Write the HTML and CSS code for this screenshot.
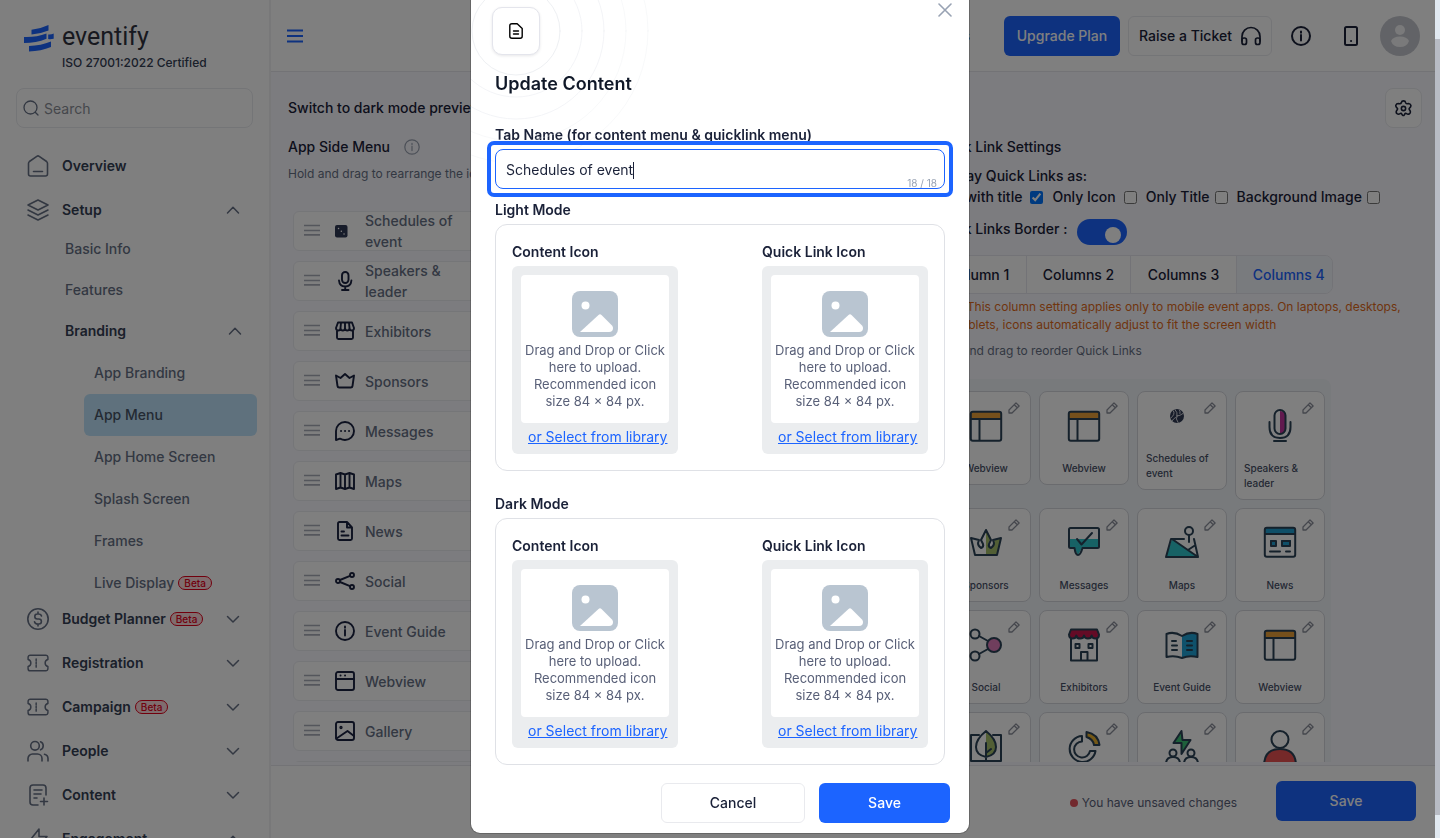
FILE: index.html
```
<!DOCTYPE html>
<html lang="en">
<head>
    <meta charset="UTF-8">
    <meta name="viewport" content="width=device-width, initial-scale=1.0">
    <link rel="stylesheet" href="styles.css">
    <title>App Menu - eventify</title>
</head>
<body>
    <!-- shared icons -->
    <svg class="d-none" xmlns="http://www.w3.org/2000/svg">
      <symbol id="i-up" viewBox="0 0 14 14"><path d="M1.5 10 7 4.2 12.500 10"/></symbol>
      <symbol id="i-down" viewBox="0 0 14 14"><path d="M1.500 4.500 7 10l5.500-5.500"/></symbol>
      <symbol id="i-ticket" viewBox="0 0 24 24"><path d="M3.500 3.500h17a2.300 2.300 0 0 1 2.300 2.300v2.400a3.900 3.900 0 0 0 0 7.600v2.400a2.300 2.300 0 0 1-2.300 2.300h-17a2.300 2.300 0 0 1-2.300-2.300v-2.400a3.900 3.900 0 0 0 0-7.600V5.800a2.300 2.300 0 0 1 2.300-2.300z"/><path d="M10 7.500v2M10 11v2M10 14.500v2"/></symbol>
      <symbol id="i-info" viewBox="0 0 20 20"><circle cx="10" cy="10" r="9"/><path d="M10 9v5.500M10 5.500v1.300"/></symbol>
      <symbol id="i-drag" viewBox="0 0 16 12"><path d="M0 1.500h16M0 6.500h16M0 10.900h16"/></symbol>
      <symbol id="i-pencil" viewBox="0 0 12 12"><path d="M1 11V8L8 .9 11.100 4 4 11zM6.800 3.200l2 2"/></symbol>
      <symbol id="i-image" viewBox="0 0 46 46"><rect width="46" height="46" rx="8" fill="#b9c5d1"/><circle cx="13.500" cy="14.500" r="4" fill="#fff"/><path d="M8 41 26.500 24q1.500-1.300 3 0L40 34.500q1 1 1 2.500 0 4-4 4z" fill="#fff"/></symbol>
      <symbol id="q-webview" viewBox="0 0 34 34"><path d="M2 3h30v7H2z" fill="#eba139" stroke="none"/><rect x="1.800" y="2.800" width="30.400" height="29" rx="2"/><path d="M2 10h30M10.500 10v21"/></symbol>
    </svg>

    <div class="app">
      <aside class="sidebar">
        <div class="brand">
          <svg class="brand-mark" viewBox="0 0 30 27"><path d="M7.500 4.800Q16 4 24.500 0v5.500Q16 9 7.500 9.500zM0 12q12 .5 22.500-3.500v5.200Q12 18 0 18zM24.200 9.500q3 .4 5.500-1v5.200q-3 .8-5.500.3zM5 21q12-.5 22-4.500V22Q17 26 5 26.500z"/></svg>
          <div>
            <div class="brand-name">eventify</div>
            <div class="brand-note">ISO 27001:2022 Certified</div>
          </div>
        </div>
        <div class="search">
          <svg class="search-icon" viewBox="0 0 16 16"><circle cx="7.500" cy="7.500" r="6.500"/><path d="m12.200 12.200 2.800 2.800"/></svg>
          <input type="text" placeholder="Search" aria-label="Search">
        </div>
        <nav>
          <a class="nav-row" href="#"><svg class="nav-icon" viewBox="0 0 22 22"><path d="M1.500 8.500Q1.500 7.300 2.400 6.500L9.800 1.300q1.200-.8 2.400 0l7.400 5.200q.9.800.9 2V19q0 2-2 2h-15q-2 0-2-2zM6.500 16.500h9"/></svg>Overview</a>
          <a class="nav-row" href="#"><svg class="nav-icon" viewBox="0 0 22 22"><path d="M11 1 21 6l-10 5L1 6zM1 11l10 5 10-5M1 16l10 5 10-5"/></svg>Setup<svg class="chevron"><use href="#i-up"/></svg></a>
          <div class="nav-sub">
            <a class="sub-row" href="#">Basic Info</a>
            <a class="sub-row" href="#">Features</a>
            <a class="sub-row open" href="#">Branding<svg class="chevron"><use href="#i-up"/></svg></a>
            <a class="leaf" href="#">App Branding</a>
            <a class="leaf active" href="#">App Menu</a>
            <a class="leaf" href="#">App Home Screen</a>
            <a class="leaf" href="#">Splash Screen</a>
            <a class="leaf" href="#">Frames</a>
            <a class="leaf" href="#">Live Display<span class="beta">Beta</span></a>
          </div>
          <a class="nav-row" href="#"><svg class="nav-icon" viewBox="0 0 22 22"><circle cx="11" cy="11" r="10.200"/><path d="M14.500 8Q14 6 11.500 6h-1.200a2.400 2.400 0 0 0 0 5h1.600a2.500 2.500 0 0 1 0 5h-1.200Q8 16 7.500 13.800M11 4v2M11 16v2"/></svg>Budget Planner<span class="beta">Beta</span><svg class="chevron"><use href="#i-down"/></svg></a>
          <a class="nav-row" href="#"><svg class="nav-icon"><use href="#i-ticket"/></svg>Registration<svg class="chevron"><use href="#i-down"/></svg></a>
          <a class="nav-row" href="#"><svg class="nav-icon"><use href="#i-ticket"/></svg>Campaign<span class="beta">Beta</span><svg class="chevron"><use href="#i-down"/></svg></a>
          <a class="nav-row" href="#"><svg class="nav-icon" viewBox="0 0 22 22"><circle cx="8" cy="5.800" r="4.300"/><path d="M1 21v-2.500a4.500 4.500 0 0 1 4.500-4.500h5a4.500 4.500 0 0 1 4.500 4.500V21M13.500 1.800a4.300 4.300 0 0 1 0 8M17.500 14.300q3.500 1 3.500 4.200V21"/></svg>People<svg class="chevron"><use href="#i-down"/></svg></a>
          <a class="nav-row" href="#"><svg class="nav-icon" viewBox="0 0 22 22"><path d="M11 21H6q-3 0-3-3V4q0-3 3-3h10q3 0 3 3v7M7 6h8M7 10h7M7 14h3M13.500 17.500h7M17 14v7"/></svg>Content<svg class="chevron"><use href="#i-down"/></svg></a>
          <a class="nav-row" href="#"><svg class="nav-icon" viewBox="0 0 22 22"><path d="M12 1v7.500h8L10 21v-7.500H2z"/></svg>Engagement<svg class="chevron"><use href="#i-up"/></svg></a>
        </nav>
      </aside>

      <main class="main">
        <header class="topbar">
          <button class="icon-btn menu-btn" aria-label="Toggle menu"><svg viewBox="0 0 16 14"><path d="M0 1.500h16M0 7h16M0 12.500h16"/></svg></button>
          <div class="topbar-tools">
            <a class="top-link" href="#">Tutorials</a>
            <button class="btn primary upgrade">Upgrade Plan</button>
            <button class="btn outline ticket">Raise a Ticket
              <svg viewBox="0 0 20 20"><path d="M1 15v-4.500a9 9 0 0 1 18 0V15"/><rect x="1" y="12" width="4.500" height="6.500" rx="2"/><rect x="14.500" y="12" width="4.500" height="6.500" rx="2"/></svg>
            </button>
            <button class="icon-btn info-btn" aria-label="Info"><svg><use href="#i-info"/></svg></button>
            <button class="icon-btn phone-btn" aria-label="Mobile preview"><svg viewBox="0 0 14 20"><rect x="1" y="1" width="12" height="18" rx="1.500"/><path d="M7 15h.1"/></svg></button>
            <svg class="avatar" viewBox="0 0 40 40"><circle cx="20" cy="20" r="20" fill="#c5c7ce"/><circle cx="20" cy="14" r="5" fill="#f4f4f6"/><path d="M11 25q2-4.500 9-4.500t9 4.500q-2 6-9 6t-9-6z" fill="#f4f4f6"/></svg>
          </div>
        </header>

        <section class="content">
          <div class="preview-row">
            <h2>Switch to dark mode preview</h2>
            <button class="btn outline gear" aria-label="Settings"><svg viewBox="0 0 16 16"><path d="M6 2.500Q6.300.8 8 .8t2 1.700q.3 1.200 1.500 1l1.200-.2q1.700.1 2.200 1.600.3 1.500-1 2.400-1 .8-.3 1.900l.7 1.100q.6 1.700-.7 2.700-1.400.8-2.700-.1-1-.8-1.700.3l-.5.900q-.7.900-1.700.2l-.6-1q-.7-1.200-1.700-.4-1.400 1-2.800 0-1.200-1-.5-2.600l.7-1.100q.7-1.100-.3-1.900-1.300-1-1-2.400.6-1.500 2.200-1.600l1.300.2q1.200.2 1.700-1z"/><circle cx="8" cy="8" r="2"/></svg></button>
          </div>

          <div class="columns">
            <div class="side-menu">
              <h2 class="section-title">App Side Menu <svg class="hint-icon"><use href="#i-info"/></svg></h2>
              <p class="hint">Hold and drag to rearrange the icons</p>
              <ul class="menu-list">
                <li><svg class="drag"><use href="#i-drag"/></svg><svg class="menu-icon" viewBox="0 0 20 20"><rect x="0" y="4" width="12.500" height="12.500" rx="2" fill="#2f3854" stroke="none"/><path d="M3.500 7.500h.1M6.300 10.200h.1M9 13h.1" stroke="#fff" stroke-width="1.400"/></svg><span>Schedules of event</span></li>
                <li><svg class="drag"><use href="#i-drag"/></svg><svg class="menu-icon" viewBox="0 0 20 20"><rect x="7" y="1" width="6.500" height="11" rx="3.200"/><path d="M4 9.500q.5 6 6.200 6t6.200-6M10.200 15.500v3.500M7 19h6.500"/></svg><span>Speakers &amp; leader</span></li>
                <li><svg class="drag"><use href="#i-drag"/></svg><svg class="menu-icon" viewBox="0 0 20 20"><path d="M2 9v7.500Q2 18 3.500 18h13q1.500 0 1.500-1.500V9M3 1.500h14L19 7q0 2.500-2.200 2.500T14.500 7q0 2.500-2.200 2.500T10 7q0 2.500-2.200 2.500T5.500 7q0 2.500-2.200 2.500T1 7zM6 1.500 5.500 7M10 1.500V7M14 1.500l.5 5.500"/></svg><span>Exhibitors</span></li>
                <li><svg class="drag"><use href="#i-drag"/></svg><svg class="menu-icon" viewBox="0 0 20 20"><path d="M1 4.500 5.500 7 10 3l4.500 4L19 4.500 17.500 15q-.2 1.500-1.700 1.500H4.200q-1.500 0-1.700-1.500z"/></svg><span>Sponsors</span></li>
                <li><svg class="drag"><use href="#i-drag"/></svg><svg class="menu-icon" viewBox="0 0 20 20"><path d="M1 19V10a9 9 0 1 1 9 9q-2.500 0-5-1.300zM6 10h.1M10 10h.1M14 10h.1"/></svg><span>Messages</span></li>
                <li><svg class="drag"><use href="#i-drag"/></svg><svg class="menu-icon" viewBox="0 0 20 20"><path d="M1 3.500 5.500 2 10 3.500 14.500 2 19 3.500V18l-4.500-1.500L10 18l-4.500-1.500L1 18zM5.500 2v14.500M10 3.500V18M14.500 2v14.500"/></svg><span>Maps</span></li>
                <li><svg class="drag"><use href="#i-drag"/></svg><svg class="menu-icon" viewBox="0 0 20 20"><path d="M4.500 1H12l5 5.500v11q0 1.500-1.500 1.500h-11Q3 19 3 17.500v-15Q3 1 4.500 1zM12 1v5.500h5M6.500 10.500H9M6.500 14.500h7"/></svg><span>News</span></li>
                <li><svg class="drag"><use href="#i-drag"/></svg><svg class="menu-icon" viewBox="0 0 20 20"><circle cx="3" cy="10" r="2"/><circle cx="17" cy="4" r="2"/><circle cx="17" cy="16" r="2"/><path d="m5 9 10-4.200M5 11l10 4.200"/></svg><span>Social</span></li>
                <li><svg class="drag"><use href="#i-drag"/></svg><svg class="menu-icon"><use href="#i-info"/></svg><span>Event Guide</span></li>
                <li><svg class="drag"><use href="#i-drag"/></svg><svg class="menu-icon" viewBox="0 0 20 20"><rect x="1" y="1" width="18" height="18" rx="2"/><path d="M1 8h18M5.500 4.500h.1M10 4.500h.1"/></svg><span>Webview</span></li>
                <li><svg class="drag"><use href="#i-drag"/></svg><svg class="menu-icon" viewBox="0 0 20 20"><rect x="1" y="1" width="18" height="18" rx="2"/><circle cx="6" cy="6.500" r=".7"/><path d="m1.500 17.500 11-7.500 6.500 5"/></svg><span>Gallery</span></li>
                <li><svg class="drag"><use href="#i-drag"/></svg></li>
              </ul>
            </div>

            <div class="quick">
              <h2 class="section-title">Quick Link Settings</h2>
              <p class="option-title">Display Quick Links as:</p>
              <div class="options">
                <label>Icon with title <input type="checkbox" checked></label>
                <label>Only Icon <input type="checkbox"></label>
                <label>Only Title <input type="checkbox"></label>
                <label>Background Image <input type="checkbox"></label>
              </div>
              <label class="border-row">Quick Links Border : <input class="switch" type="checkbox" checked></label>
              <div class="segments">
                <button>Column 1</button>
                <button>Columns 2</button>
                <button>Columns 3</button>
                <button class="active">Columns 4</button>
              </div>
              <p class="warning">Note: This column setting applies only to mobile event apps. On laptops, desktops, and tablets, icons automatically adjust to fit the screen width</p>
              <p class="hint">Hold and drag to reorder Quick Links</p>
              <div class="cards">
                <div class="card"><svg class="pencil"><use href="#i-pencil"/></svg><svg class="card-icon"><use href="#q-webview"/></svg><span>Webview</span></div>
                <div class="card"><svg class="pencil"><use href="#i-pencil"/></svg><svg class="card-icon"><use href="#q-webview"/></svg><span>Webview</span></div>
                <div class="card"><svg class="pencil"><use href="#i-pencil"/></svg><svg class="card-icon small" viewBox="0 0 24 24"><circle cx="7" cy="7" r="7" fill="#303a55" stroke="none"/><path d="M7 7Q8 3.500 5 .5M7 7q3 0 6-2.500M7 7Q5 9.500 8 13.500M3.500 2Q5.500 5.500 .8 9M9.500 1q1 1.500.5 3.500M5.500 8.500Q3.500 9.500 2 12" stroke="#fff" stroke-width=".8"/></svg><span>Schedules of event</span></div>
                <div class="card"><svg class="pencil"><use href="#i-pencil"/></svg><svg class="card-icon" viewBox="0 0 34 34"><path d="M17 2q6 0 6 7v9q0 7-6 7z" fill="#c2329c" stroke="none"/><rect x="11.500" y="1" width="11" height="24" rx="5.500"/><path d="M6.500 13v5q0 11 10.500 11t10.500-11v-5M11 32h12"/></svg><span>Speakers &amp; leader</span></div>

                <div class="card"><svg class="pencil"><use href="#i-pencil"/></svg><svg class="card-icon" viewBox="0 0 34 34"><path d="m17 4 5 8-3 6q1 4 4 3 3-1 2-7l7-2-4 17H17z" fill="#a5be6b" stroke="none"/><path d="M6 29 2 12l8 2-1 3q0 3 3 5 3-1 2-4l-2-4 5-10 5 10-2 4q-1 3 2 4 3-2 3-5l-1-3 8-2-4 17z"/></svg><span>Sponsors</span></div>
                <div class="card"><svg class="pencil"><use href="#i-pencil"/></svg><svg class="card-icon" viewBox="0 0 34 34"><path d="M2 13h30v9H15l-4 7-4-7H2z" fill="#2fc4cb" stroke="none"/><path d="M3.500 2h27q1.500 0 1.500 1.500v17q0 1.500-1.500 1.500H15.500q-2 7-4.500 7t-3.500-7h-4Q2 22 2 20.500v-17Q2 2 3.500 2zM10 13l4.500 5.500L25 7"/></svg><span>Messages</span></div>
                <div class="card"><svg class="pencil"><use href="#i-pencil"/></svg><svg class="card-icon" viewBox="0 0 34 34"><path d="m7 13 26 18H1z" fill="#2fc4cb" stroke="none"/><path d="M19 13H6L1 31h32L7 13M33 31l-4-18M23 24l6-4"/><circle cx="24" cy="5" r="4"/><path d="M24 9v7"/></svg><span>Maps</span></div>
                <div class="card"><svg class="pencil"><use href="#i-pencil"/></svg><svg class="card-icon" viewBox="0 0 34 34"><path d="M2 2h30v6H2zM7 14h6v6H7zM18 14h10v6H18z" fill="#1f9fd0" stroke="none"/><rect x="1.800" y="1.800" width="30.400" height="29" rx="2"/><path d="M2 8h30M8 15h5v5H8zM19 15h8v5h-8zM7 25.500h10M23 25.500h4"/></svg><span>News</span></div>

                <div class="card"><svg class="pencil"><use href="#i-pencil"/></svg><svg class="card-icon" viewBox="0 0 34 34"><circle cx="25" cy="17" r="7" fill="#e07cbb"/><circle cx="6" cy="6" r="4.500"/><circle cx="6" cy="28" r="4.500"/><path d="m10 8 9 5M10 26l9-5"/></svg><span>Social</span></div>
                <div class="card"><svg class="pencil"><use href="#i-pencil"/></svg><svg class="card-icon" viewBox="0 0 34 34"><path d="M4 1.500h26l2 5q0 4-3.500 4t-3.800-3q-.5 3-3.800 3T17 7.500q-.5 3-3.900 3t-3.800-3q-.5 3-3.800 3T2 6.500z" fill="#c9164d"/><path d="M4 11v21.500h26V11M8.500 16h4v4h-4zM21.500 16h4v4h-4zM14 32v-8h6.500v8"/></svg><span>Exhibitors</span></div>
                <div class="card"><svg class="pencil"><use href="#i-pencil"/></svg><svg class="card-icon" viewBox="0 0 34 34"><path d="M17 8q7-5 15-2v23q-8-2-15 1z" fill="#1fa3d6" stroke="none"/><path d="M17 8Q9 3 1.500 6v23q8-2 15.500 1 7-3 15.500-1V6Q25 3 17 8zM7 13h4M7 17.500h5M7 22h5M22 13h5M22 17.500h5M22 22h5"/></svg><span>Event Guide</span></div>
                <div class="card"><svg class="pencil"><use href="#i-pencil"/></svg><svg class="card-icon"><use href="#q-webview"/></svg><span>Webview</span></div>

                <div class="card"><svg class="pencil"><use href="#i-pencil"/></svg><svg class="card-icon" viewBox="0 0 34 34"><path d="M17 1q10 8 10 16 0 8-10 10z" fill="#a5be6b" stroke="none"/><path d="M10 5H2v26h30V5h-8M17 1Q7 9 7 17q0 8 10 10 10-2 10-10 0-8-10-16zM17 13v17M17 23l5-4"/></svg></div>
                <div class="card"><svg class="pencil"><use href="#i-pencil"/></svg><svg class="card-icon" viewBox="0 0 34 34"><path d="M19.500 2Q31 4 32.500 15H27q-1-6-7.500-8z" fill="#e9b02c"/><path d="M15 6v5.500a8 8 0 1 0 8 9.500h5.500A13 13 0 1 1 15 6z"/></svg></div>
                <div class="card"><svg class="pencil"><use href="#i-pencil"/></svg><svg class="card-icon" viewBox="0 0 34 34"><path d="m16.500 1-8 12h8v11l9-14h-8z" fill="#3cc277"/><circle cx="8" cy="23" r="3.500"/><circle cx="26" cy="23" r="3.500"/><path d="M1 34q0-7 7-7t7 7M19 34q0-7 7-7t7 7"/></svg></div>
                <div class="card"><svg class="pencil"><use href="#i-pencil"/></svg><svg class="card-icon" viewBox="0 0 34 34"><path d="M1 36q0-17 16-17t16 17z" fill="#ea5252"/><circle cx="17" cy="9.500" r="8.500"/></svg></div>
              </div>
            </div>
          </div>
        </section>

        <footer class="savebar">
          <span class="unsaved">You have unsaved changes</span>
          <button class="btn primary save-btn">Save</button>
        </footer>
      </main>
    </div>

    <div class="overlay">
      <form class="modal" role="dialog" aria-labelledby="modal-title">
        <svg class="rings" viewBox="0 0 270 270">
          <circle cx="135" cy="135" r="44"/><circle cx="135" cy="135" r="66"/><circle cx="135" cy="135" r="88"/><circle cx="135" cy="135" r="110"/><circle cx="135" cy="135" r="132"/>
        </svg>
        <button class="close" type="button" aria-label="Close"><svg viewBox="0 0 14 14"><path d="m1 1 12 12M13 1 1 13"/></svg></button>
        <div class="modal-icon"><svg viewBox="0 0 14 16"><path d="M3 .8h5.200l5 4.700v7.700q0 2-2 2H3q-2.200 0-2.200-2V2.800Q.8.800 3 .8zM4.500 8h5M4.500 11h5"/></svg></div>
        <h1 id="modal-title">Update Content</h1>

        <label class="field-label" for="tab-name">Tab Name (for content menu &amp; quicklink menu)</label>
        <div class="field">
          <input id="tab-name" type="text" value="Schedules of event" maxlength="18"><span class="caret"></span>
          <span class="counter">18 / 18</span>
        </div>

        <h2 class="mode-title">Light Mode</h2>
        <div class="mode-box">
          <div>
            <h3>Content Icon</h3>
            <div class="upload">
              <button class="drop" type="button"><svg><use href="#i-image"/></svg>Drag and Drop or Click here to upload. Recommended icon size 84 × 84 px.</button>
              <a href="#">or Select from library</a>
            </div>
          </div>
          <div>
            <h3>Quick Link Icon</h3>
            <div class="upload">
              <button class="drop" type="button"><svg><use href="#i-image"/></svg>Drag and Drop or Click here to upload. Recommended icon size 84 × 84 px.</button>
              <a href="#">or Select from library</a>
            </div>
          </div>
        </div>

        <h2 class="mode-title dark">Dark Mode</h2>
        <div class="mode-box">
          <div>
            <h3>Content Icon</h3>
            <div class="upload">
              <button class="drop" type="button"><svg><use href="#i-image"/></svg>Drag and Drop or Click here to upload. Recommended icon size 84 × 84 px.</button>
              <a href="#">or Select from library</a>
            </div>
          </div>
          <div>
            <h3>Quick Link Icon</h3>
            <div class="upload">
              <button class="drop" type="button"><svg><use href="#i-image"/></svg>Drag and Drop or Click here to upload. Recommended icon size 84 × 84 px.</button>
              <a href="#">or Select from library</a>
            </div>
          </div>
        </div>

        <div class="modal-actions">
          <button class="btn outline cancel" type="button">Cancel</button>
          <button class="btn primary confirm" type="button">Save</button>
        </div>
      </form>
    </div>
    <div class="scrollbar"><div class="thumb"></div></div>
</body>
</html>
```
FILE: styles.css
```
* {
  box-sizing: border-box;
}
html,body {
  height: 100%;
  margin: 0;
  padding: 0;
}
body {
  overflow: hidden;
  color: #1a2138;
  font-family: Inter, "Liberation Sans", Arial, sans-serif;
  font-size: 14px;
  line-height: 20px;
}
h1,h2,h3,p,ul {
  margin: 0;
  padding: 0;
  font-size: 14px;
  font-weight: 500;
}
ul {
  list-style: none;
}
a {
  color: inherit;
  text-decoration: none;
}
button,input {
  font: inherit;
  color: inherit;
}
svg {
  flex: none;
  fill: none;
  stroke: currentColor;
  stroke-linecap: round;
  stroke-linejoin: round;
}
.d-none {
  display: none;
}
.app {
  display: flex;
  height: 100%;
  padding-right: 5px;
}

/* sidebar */
.sidebar {
  flex: none;
  width: 271px;
  overflow: hidden;
  border-right: 2px solid #f0f0f2;
}
.brand {
  display: flex;
  gap: 8px;
  height: 88px;
  padding: 23px 0 0 24px;
}
.brand-mark {
  width: 30px;
  height: 27px;
  margin-top: 2px;
  fill: #1c64ff;
  stroke: none;
}
.brand-name {
  color: #30333e;
  font-family: Roboto, sans-serif;
  font-size: 25px;
  line-height: 28px;
}
.brand-note {
  color: #344054;
  font-size: 12px;
  font-weight: 500;
  line-height: 24px;
}
.search {
  display: flex;
  align-items: center;
  gap: 5px;
  height: 40px;
  margin: 0 16px 16px;
  padding-left: 6px;
  border: 1px solid #e9eaee;
  border-radius: 8px;
}
.search-icon {
  width: 16px;
  height: 16px;
  color: #667085;
  stroke-width: 1.3;
}
.search input {
  flex: 1;
  min-width: 0;
  padding: 2px 0 0;
  border: 0;
  background: none;
}
.search input::placeholder {
  color: #8b8f98;
}
.nav-row {
  display: flex;
  align-items: center;
  height: 44px;
  padding: 0 29px 0 27px;
  color: #344054;
  font-weight: 600;
}
.nav-icon {
  width: 22px;
  height: 22px;
  margin-right: 13px;
  color: #667085;
  stroke-width: 1.6;
}
.chevron {
  width: 14px;
  height: 14px;
  margin-left: auto;
  color: #667085;
  stroke-width: 1.5;
}
.nav-sub {
  margin: -4px 0 -7px;
  color: #667085;
  font-weight: 500;
}
.sub-row {
  display: flex;
  align-items: center;
  height: 41px;
  padding: 0 27px 0 65px;
}
.sub-row.open {
  height: 42px;
  color: #344054;
  font-weight: 600;
}
.leaf {
  display: flex;
  align-items: center;
  height: 42px;
  margin: 0 12px 0 84px;
  padding-left: 10px;
  border-radius: 6px;
}
.leaf.active {
  background: #bfe3fa;
  color: #475467;
}
.beta {
  margin-left: 4px;
  padding: 0 5px;
  border: 1px solid #e3001b;
  border-radius: 8px;
  background: #ffdadd;
  color: #e3001b;
  font-size: 10px;
  font-weight: 500;
  line-height: 12px;
}

/* main area */
.main {
  display: flex;
  flex: 1;
  flex-direction: column;
  min-width: 0;
  background: #f9f9fe;
}
.btn {
  height: 40px;
  border: 1px solid transparent;
  border-radius: 6px;
  font-weight: 500;
}
.btn.primary {
  background: #1c64ff;
  color: #fff;
}
.btn.outline {
  border-color: #e9eaee;
  background: #fff;
}
.icon-btn {
  display: flex;
  padding: 0;
  border: 0;
  background: none;
  stroke-width: 2;
}
.topbar {
  display: flex;
  align-items: center;
  justify-content: space-between;
  flex: none;
  height: 72px;
  padding: 0 15px 0 16px;
  border-bottom: 1px solid #e6e7ec;
  background: #fff;
}
.menu-btn {
  color: #1c64ff;
}
.menu-btn svg {
  width: 16px;
  height: 14px;
}
.topbar-tools {
  display: flex;
  align-items: center;
  gap: 8px;
}
.top-link {
  margin-right: 26px;
  font-weight: 500;
}
.upgrade {
  width: 116px;
}
.ticket {
  display: flex;
  align-items: center;
  justify-content: space-between;
  width: 144px;
  padding: 0 10px;
}
.ticket svg {
  width: 20px;
  height: 20px;
  stroke-width: 1.7;
}
.info-btn {
  margin: 0 25px 0 11px;
}
.info-btn svg {
  width: 20px;
  height: 20px;
}
.phone-btn {
  margin-right: 14px;
}
.phone-btn svg {
  width: 14px;
  height: 20px;
}
.avatar {
  width: 40px;
  height: 40px;
  stroke: none;
}
.content {
  display: flex;
  flex: 1;
  flex-direction: column;
  min-height: 0;
  margin-bottom: 3px;
  padding: 16px 13px 0 17px;
  overflow: hidden;
}
.preview-row {
  display: flex;
  align-items: center;
  justify-content: space-between;
  flex: none;
}
.gear {
  width: 37px;
  padding: 0 9px;
  border-radius: 8px;
}
.gear svg {
  display: block;
  width: 17px;
  height: 17px;
  stroke-width: 1.5;
}
.columns {
  display: grid;
  grid-template-columns: minmax(0, 1fr) 489px;
  padding-top: 9px;
}
.section-title {
  display: flex;
  align-items: center;
  gap: 14px;
}
.hint-icon {
  width: 16px;
  height: 16px;
  color: #98a0b0;
  stroke-width: 1.5;
}
.hint {
  color: #667085;
  font-size: 12px;
  font-weight: 400;
}
.side-menu .hint {
  margin: 7px 0 27px;
}
.menu-list {
  display: grid;
  gap: 10px;
  width: 360px;
  margin-left: 5px;
}
.menu-list li {
  display: flex;
  align-items: center;
  height: 40px;
  padding-left: 10px;
  border: 1px solid #ebecf1;
  border-radius: 6px;
  background: #fff;
  color: #667085;
  font-weight: 500;
  line-height: 21px;
}
.menu-list span {
  width: 100px;
}
.drag {
  width: 16px;
  height: 12px;
  margin: 0 15px 2px 0;
  color: #a9adb8;
  stroke-width: 1.6;
  stroke-linecap: butt;
}
.menu-icon {
  width: 20px;
  height: 20px;
  margin-right: 10px;
  color: #1a2240;
  stroke-width: 1.9;
}
.option-title,.options {
  font-weight: 500;
}
.option-title {
  margin-top: 9px;
}
.options {
  display: flex;
  gap: 9px;
  margin-top: 1px;
}
.options label {
  display: flex;
  align-items: center;
  gap: 8px;
}
.options label:nth-child(n+3) {
  gap: 5px;
}
.options input {
  width: 13px;
  height: 13px;
  margin: 0;
}
.border-row {
  display: flex;
  align-items: flex-start;
  gap: 10px;
  margin: 12px 0 10px;
  font-weight: 500;
}
.switch {
  width: 50px;
  height: 26px;
  margin: 0;
  padding: 8px 6px 2px;
  border-radius: 13px;
  background: #1c64ff;
  appearance: none;
}
.switch::before {
  display: block;
  width: 16px;
  height: 16px;
  margin-left: auto;
  border-radius: 50%;
  background: #fff;
  content: '';
}
.segments {
  display: flex;
  width: 400px;
  overflow: hidden;
  border: 1px solid #e6e7ee;
  border-radius: 8px;
}
.segments button {
  flex: 1 0 auto;
  height: 37px;
  padding: 0 16px;
  border: 0;
  border-right: 1px solid #e6e7ee;
  background: #fff;
  font-weight: 500;
}
.segments button:first-child {
  padding-left: 14px;
}
.segments button:last-child {
  padding-right: 7px;
  border-right: 0;
}
.segments .active {
  background: #f3f6fd;
  color: #1c64ff;
}
.warning {
  margin: 4px 0 7px;
  color: #e06a1b;
  font-size: 12px;
  font-weight: 400;
  line-height: 18px;
}
.cards {
  display: grid;
  grid-template-columns: repeat(4, 90px);
  align-items: start;
  gap: 8px;
  width: 398px;
  margin-top: 18px;
  padding: 12px 6px 0 8px;
  border-radius: 8px;
  background: #f0f4f9;
}
.card {
  position: relative;
  display: flex;
  align-items: center;
  flex-direction: column;
  padding: 17px 8px 8px;
  border: 1px solid #d5d7dd;
  border-radius: 8px;
  background: #fff;
  color: #475067;
  font-size: 10px;
  font-weight: 500;
  line-height: 15px;
}
.card-icon {
  width: 34px;
  height: 34px;
  margin-bottom: 18px;
  color: #2b4257;
  stroke-width: 2;
}
.card-icon.small {
  width: 24px;
  height: 24px;
}
.pencil {
  position: absolute;
  top: 10px;
  right: 10px;
  width: 12px;
  height: 12px;
  color: #8b8f9b;
  stroke-width: 1.3;
}
.savebar {
  display: flex;
  align-items: center;
  justify-content: flex-end;
  gap: 39px;
  flex: none;
  height: 73px;
  padding: 0 19px 2px 0;
  border-top: 1px solid #e6e7ec;
  background: #fff;
}
.unsaved {
  display: flex;
  align-items: center;
  gap: 4px;
  padding-top: 4px;
  color: #596078;
  font-size: 12px;
}
.unsaved::before {
  width: 8px;
  height: 8px;
  border-radius: 50%;
  background: #e5525c;
  content: '';
}
.save-btn {
  width: 140px;
}

/* modal */
.overlay {
  position: fixed;
  inset: 0;
  display: flex;
  align-items: flex-end;
  justify-content: center;
  padding-bottom: 4px;
  overflow: hidden;
  background: rgba(0, 0, 0, 0.5);
}
.modal {
  position: relative;
  width: 500px;
  padding: 24px 24px 10px;
  overflow: hidden;
  border: 1px solid rgba(0, 0, 0, 0.2);
  border-radius: 10px;
  background: #fff;
  background-clip: padding-box;
}
.rings {
  position: absolute;
  top: -87px;
  left: -90px;
  width: 270px;
  height: 270px;
  color: #eef0f3;
}
.rings circle:nth-child(n+2) {
  opacity: 0.7;
}
.rings circle:nth-child(n+4) {
  opacity: 0.4;
}
.close {
  position: absolute;
  top: 20px;
  right: 17px;
  display: flex;
  padding: 0;
  border: 0;
  background: none;
  color: #98a2b3;
}
.close svg {
  width: 14px;
  height: 14px;
  stroke-width: 1.6;
}
.modal-icon {
  position: relative;
  display: flex;
  align-items: center;
  justify-content: center;
  width: 48px;
  height: 48px;
  margin-left: -3px;
  border: 1px solid #e4e5ec;
  border-radius: 10px;
  background: #fff;
  box-shadow: 0 1px 3px rgba(16, 24, 40, 0.1);
  color: #000;
}
.modal-icon svg {
  width: 14px;
  height: 16px;
  stroke-width: 1.4;
}
.modal h1 {
  position: relative;
  margin: 15px 0 27px;
  color: #101828;
  font-size: 18px;
  font-weight: 600;
  line-height: 28px;
}
.field-label,.mode-title,.mode-box h3 {
  display: block;
  font-weight: 600;
}
.field {
  position: relative;
  display: flex;
  align-items: center;
  height: 40px;
  margin: 4px 0 11px;
  padding: 2px 10px 0;
  border: 1px solid #1c64ff;
  border-radius: 8px;
  background: #fff;
}
/* highlight frame round the focused field */
.field::before {
  position: absolute;
  inset: -9px;
  border: 4px solid #1c64ff;
  border-radius: 7px;
  content: '';
  pointer-events: none;
}
.field input {
  field-sizing: content;
  min-width: 0;
  padding: 0;
  border: 0;
  outline: 0;
  background: none;
}
.caret {
  width: 1px;
  height: 17px;
  background: #1a2138;
}
.counter {
  position: absolute;
  right: 7px;
  bottom: -1px;
  color: #98a2b3;
  font-size: 10px;
  line-height: 12px;
}
.mode-title.dark {
  margin-top: 23px;
}
.mode-box {
  display: grid;
  grid-template-columns: 250px 1fr;
  margin-top: 4px;
  padding: 17px 16px 16px;
  border: 1px solid #dfe1e6;
  border-radius: 12px;
}
.upload {
  width: 166px;
  height: 188px;
  margin-top: 4px;
  padding: 9px;
  border-radius: 6px;
  background: #ebedef;
}
.drop {
  display: flex;
  align-items: center;
  flex-direction: column;
  width: 148px;
  height: 148px;
  padding: 16px 2px 0;
  border: 0;
  border-radius: 4px;
  background: #fff;
  color: #596078;
  font-size: 13px;
  line-height: 17px;
}
.drop svg {
  width: 46px;
  height: 46px;
  margin-bottom: 5px;
  stroke: none;
}
.upload a {
  display: block;
  margin: 4px 0 0 7px;
  color: #1c64ff;
  text-decoration: underline;
  white-space: nowrap;
}
.modal-actions {
  display: flex;
  justify-content: flex-end;
  gap: 14px;
  margin: 18px -5px 0 0;
}
.cancel {
  width: 144px;
}
.confirm {
  width: 131px;
}

/* page scrollbar */
.scrollbar {
  position: fixed;
  inset: 0 0 0 auto;
  width: 5px;
  padding: 39px 0 23px;
  background: #e1e9f1;
}
.thumb {
  height: 100%;
  background: #b8bcc5;
}
```
